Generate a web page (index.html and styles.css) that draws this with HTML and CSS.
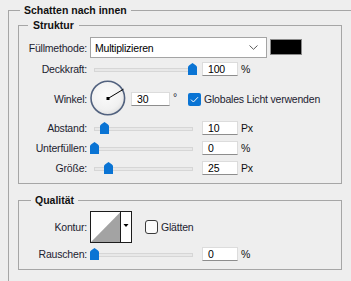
FILE: index.html
```html
<!DOCTYPE html>
<html lang="de">
<head>
<meta charset="utf-8">
<title>Schatten nach innen</title>
<link rel="stylesheet" href="styles.css">
</head>
<body>
<fieldset class="outer">
  <legend class="outer-title">Schatten nach innen</legend>

  <fieldset class="group struktur">
    <legend class="group-title t-struktur">Struktur</legend>
    <div class="form form-struktur">
      <span class="lbl">Füllmethode:</span>
      <div class="ctl">
        <div class="select">
          <span class="select-text">Multiplizieren</span>
          <svg class="chev" width="9" height="5" viewBox="0 0 9 5"><path d="M0.5 0.5 L4.5 4.3 L8.5 0.5" fill="none" stroke="#5a5a5a" stroke-width="1"/></svg>
        </div>
        <div class="swatch"></div>
      </div>

      <span class="lbl">Deckkraft:</span>
      <div class="ctl">
        <div class="slider"><div class="track"></div><svg class="thumb" style="left:98px" width="9" height="12" viewBox="0 0 9 12"><path d="M0 4.2 Q0 3 1.3 2.2 L4.5 0 L7.7 2.2 Q9 3 9 4.2 V12 H0 Z" fill="#0a74d4"/></svg></div>
        <div class="num">100</div>
        <span class="unit">%</span>
      </div>

      <span class="lbl">Winkel:</span>
      <div class="ctl ctl-angle">
        <svg class="dial" width="36" height="36" viewBox="0 0 36 36">
          <defs>
            <radialGradient id="dg" cx="0.45" cy="0.4" r="0.6">
              <stop offset="0" stop-color="#fbfbfb"/>
              <stop offset="0.75" stop-color="#f1f1f1"/>
              <stop offset="1" stop-color="#e2e2e2"/>
            </radialGradient>
          </defs>
          <circle cx="17.8" cy="18" r="16.8" fill="url(#dg)" stroke="#52627f" stroke-width="1.6"/>
          <line x1="18" y1="18.5" x2="33.5" y2="9.2" stroke="#000" stroke-width="1"/>
          <rect x="16.5" y="17" width="3" height="3" fill="#000"/>
        </svg>
        <div class="num num-angle">30</div>
        <span class="deg">°</span>
        <span class="check checked"><svg width="13" height="13" viewBox="0 0 13 13"><path d="M3 6.6 L5.4 9 L10 4.2" fill="none" stroke="#fff" stroke-width="1"/></svg></span>
        <span class="check-label">Globales Licht verwenden</span>
      </div>

      <span class="lbl">Abstand:</span>
      <div class="ctl">
        <div class="slider"><div class="track"></div><svg class="thumb" style="left:10px" width="9" height="12" viewBox="0 0 9 12"><path d="M0 4.2 Q0 3 1.3 2.2 L4.5 0 L7.7 2.2 Q9 3 9 4.2 V12 H0 Z" fill="#0a74d4"/></svg></div>
        <div class="num">10</div>
        <span class="unit">Px</span>
      </div>

      <span class="lbl">Unterfüllen:</span>
      <div class="ctl">
        <div class="slider"><div class="track"></div><svg class="thumb" style="left:0px" width="9" height="12" viewBox="0 0 9 12"><path d="M0 4.2 Q0 3 1.3 2.2 L4.5 0 L7.7 2.2 Q9 3 9 4.2 V12 H0 Z" fill="#0a74d4"/></svg></div>
        <div class="num">0</div>
        <span class="unit">%</span>
      </div>

      <span class="lbl">Größe:</span>
      <div class="ctl">
        <div class="slider"><div class="track"></div><svg class="thumb" style="left:14px" width="9" height="12" viewBox="0 0 9 12"><path d="M0 4.2 Q0 3 1.3 2.2 L4.5 0 L7.7 2.2 Q9 3 9 4.2 V12 H0 Z" fill="#0a74d4"/></svg></div>
        <div class="num">25</div>
        <span class="unit">Px</span>
      </div>
    </div>
  </fieldset>

  <fieldset class="group qualitaet">
    <legend class="group-title t-qualitaet">Qualität</legend>
    <div class="form form-qualitaet">
      <span class="lbl">Kontur:</span>
      <div class="ctl">
        <svg class="contour" width="42" height="32" viewBox="0 0 42 32">
          <rect x="0.5" y="0.5" width="41" height="31" fill="#fff" stroke="#1c1c1c"/>
          <polygon points="1,31 30.5,1 30.5,31" fill="#a3a3a3"/>
          <line x1="30.5" y1="0.5" x2="30.5" y2="31.5" stroke="#1c1c1c"/>
          <polygon points="33.5,13 38.5,13 36,16" fill="#000"/>
        </svg>
        <span class="check unchecked"></span>
        <span class="check-label">Glätten</span>
      </div>

      <span class="lbl">Rauschen:</span>
      <div class="ctl">
        <div class="slider"><div class="track"></div><svg class="thumb" style="left:0px" width="9" height="12" viewBox="0 0 9 12"><path d="M0 4.2 Q0 3 1.3 2.2 L4.5 0 L7.7 2.2 Q9 3 9 4.2 V12 H0 Z" fill="#0a74d4"/></svg></div>
        <div class="num">0</div>
        <span class="unit">%</span>
      </div>
    </div>
  </fieldset>
</fieldset>
</body>
</html>
```

FILE: styles.css
```css
html, body {
  margin: 0;
  padding: 0;
  background: #eeeeee;
  overflow: hidden;
}

body {
  width: 351px;
  height: 281px;
  font-family: "Liberation Sans", Arial, sans-serif;
  font-size: 10.5px;
  letter-spacing: -0.2px;
  color: #1c2230;
}

fieldset {
  min-inline-size: 0;
  box-sizing: border-box;
}

legend {
  height: 13px;
  line-height: 13px;
  font-weight: bold;
  font-size: 10.5px;
  letter-spacing: 0;
  color: #111;
}

.outer {
  margin: 4px 0 0 8px;
  padding: 2px 0 11px 9px;
  border: none;
  border-top: 1px solid #a6a6a6;
  border-left: 1px solid #a6a6a6;
}

.outer-title {
  margin-left: 2px;
  padding: 0 4px;
}

.group {
  width: 324px;
  margin: 0;
  border: 1px solid #a6a6a6;
}

.struktur {
  padding: 5px 0 5px 0;
}

.qualitaet {
  margin-top: 10px;
  padding: 4px 0 4px 0;
}

.t-struktur {
  margin-left: 9px;
  padding: 0 5px;
}

.t-qualitaet {
  margin-left: 12px;
  padding: 0 4px;
}

.form {
  display: grid;
  grid-template-columns: 68px 1fr;
  column-gap: 3px;
}

.form-struktur {
  grid-template-rows: 21px 22px 38px 20px 20px 20px;
}

.form-qualitaet {
  grid-template-rows: 32px 22px;
}

.lbl {
  text-align: right;
  align-self: center;
  white-space: nowrap;
}

.ctl {
  display: flex;
  align-items: center;
  min-width: 0;
}

/* select */
.select {
  width: 177px;
  height: 21px;
  box-sizing: border-box;
  background: #fff;
  border: 1px solid #a4a4a4;
  display: flex;
  align-items: center;
  padding: 0 4px 0 4px;
}

.select-text {
  flex: 1;
  color: #000;
}

.chev {
  display: block;
  margin-right: 4px;
}

.swatch {
  width: 32px;
  height: 16px;
  box-sizing: border-box;
  margin-left: 3px;
  align-self: flex-start;
  margin-top: 2px;
  background: #000;
  border: 1px solid #8a8a8a;
}

/* slider */
.slider {
  position: relative;
  width: 108px;
  height: 12px;
  box-sizing: border-box;
  padding: 5px 5px 0 4px;
}

.track {
  height: 4px;
  box-sizing: border-box;
  background: #e8e8e8;
  border: 1px solid #d6d6d6;
}

.thumb {
  position: absolute;
  top: 0;
  display: block;
}

/* number field */
.num {
  width: 36px;
  height: 14px;
  box-sizing: border-box;
  margin-left: 4px;
  padding-left: 5px;
  background: #fff;
  border: 1px solid #dcdcdc;
  border-bottom-color: #8d8d8d;
  line-height: 12px;
  color: #000;
}

.unit {
  margin-left: 3px;
  color: #111;
}

/* angle row */
.ctl-angle {
  align-items: center;
}

.dial {
  display: block;
  align-self: flex-start;
}

.num-angle {
  width: 39px;
  margin-left: 5px;
}

.deg {
  margin-left: 3px;
  align-self: flex-start;
  margin-top: 12px;
  line-height: 10px;
}

.check {
  display: inline-block;
  box-sizing: border-box;
  width: 13px;
  height: 13px;
  border-radius: 2px;
}

.check svg {
  display: block;
}

.checked {
  margin-left: 11px;
  background: #0a74d4;
}

.unchecked {
  height: 14px;
  margin-left: 13px;
  background: #fbfbfb;
  border: 1px solid #3a3a3a;
  border-radius: 3px;
}

.check-label {
  margin-left: 3px;
  white-space: nowrap;
}

.contour {
  display: block;
}
```
